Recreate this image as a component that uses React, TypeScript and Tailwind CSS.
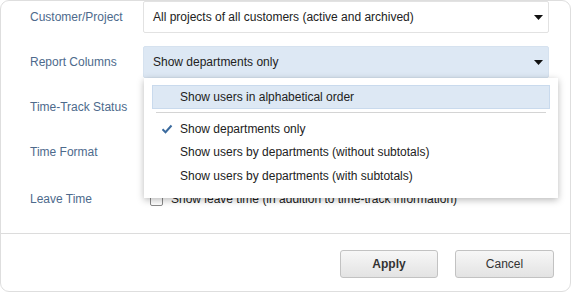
import { type FC } from "react";

const labelCls = "w-[142px] shrink-0 pl-[29px] text-[12px] text-[#4d6a8c]";

const Caret: FC = () => (
  <svg width="9" height="5" viewBox="0 0 9 5" className="shrink-0">
    <path d="M0 0h9L4.5 5z" fill="#111" />
  </svg>
);

const options = [
  "Show departments only",
  "Show users by departments (without subtotals)",
  "Show users by departments (with subtotals)",
];

export default function App() {
  return (
    <div
      className="w-[572px] h-[293px] bg-white"
      style={{ fontFamily: '"Liberation Sans", Arial, sans-serif' }}
    >
      <div className="w-[571px] h-[292px] border border-[#dedede] rounded-[9px] flex flex-col overflow-hidden">
        {/* Form rows */}
        <div className="flex flex-col gap-[13px] h-[232px]">
          <div className="flex items-center h-[32px]">
            <span className={labelCls}>Customer/Project</span>
            <div className="w-[406px] h-[32px] border border-[#e2e2e2] rounded-[2px] bg-white flex items-center justify-between pl-[9px] pr-[5px] text-[12px] text-[#222]">
              <span>All projects of all customers (active and archived)</span>
              <Caret />
            </div>
          </div>

          <div className="flex items-center h-[32px]">
            <span className={labelCls}>Report Columns</span>
            <div className="relative w-[406px] h-[32px]">
              <div className="h-full border border-[#d6e2ef] rounded-[2px] bg-[#dde8f4] flex items-center justify-between pl-[9px] pr-[5px] text-[12px] text-[#222]">
                <span>Show departments only</span>
                <Caret />
              </div>
              {/* Open dropdown menu */}
              <div className="absolute left-[1px] top-[32px] w-[414px] bg-white shadow-[0_2px_7px_rgba(0,0,0,0.28)] z-10 pt-[7px] pb-[10px] text-[12px] text-[#222]">
                <div className="mx-[8px] h-[24px] bg-[#dde8f4] border border-[#c9daed] flex items-center pl-[27px]">
                  Show users in alphabetical order
                </div>
                <div className="mx-[12px] mt-[3px] mb-[4px] h-px bg-[#d4d4d4]" />
                {options.map((o, i) => (
                  <div key={o} className="h-[23.5px] flex items-center">
                    <span className="w-[36px] flex justify-end pr-[7px]">
                      {i === 0 && (
                        <svg width="12" height="10" viewBox="0 0 12 10">
                          <path d="M1.5 5.2l3 3L10.5 1.5" fill="none" stroke="#3b6b9e" strokeWidth="2" />
                        </svg>
                      )}
                    </span>
                    <span>{o}</span>
                  </div>
                ))}
              </div>
            </div>
          </div>

          <div className="flex items-center h-[32px]">
            <span className={labelCls}>Time-Track Status</span>
          </div>

          <div className="flex items-center h-[32px]">
            <span className={labelCls}>Time Format</span>
          </div>

          <div className="flex items-center h-[32px] mt-[2px]">
            <span className={labelCls}>Leave Time</span>
            <div className="flex items-center gap-[8px] pl-[7px] text-[12px] text-[#222]">
              <span className="w-[13px] h-[13px] border border-[#8a8a8a] rounded-[2px] bg-white" />
              <span>Show leave time (in addition to time-track information)</span>
            </div>
          </div>
        </div>

        {/* Footer */}
        <div className="border-t border-[#dcdcdc] flex-1 flex justify-end items-start pt-[16px] pr-[16px] gap-[17px]">
          <button className="w-[98px] h-[28px] rounded-[3px] border border-[#c2c2c2] bg-gradient-to-b from-[#f7f7f7] to-[#e3e3e3] text-[12px] font-bold text-[#333]">
            Apply
          </button>
          <button className="w-[99px] h-[28px] rounded-[3px] border border-[#c2c2c2] bg-gradient-to-b from-[#f7f7f7] to-[#e3e3e3] text-[12px] text-[#333]">
            Cancel
          </button>
        </div>
      </div>
    </div>
  );
}
